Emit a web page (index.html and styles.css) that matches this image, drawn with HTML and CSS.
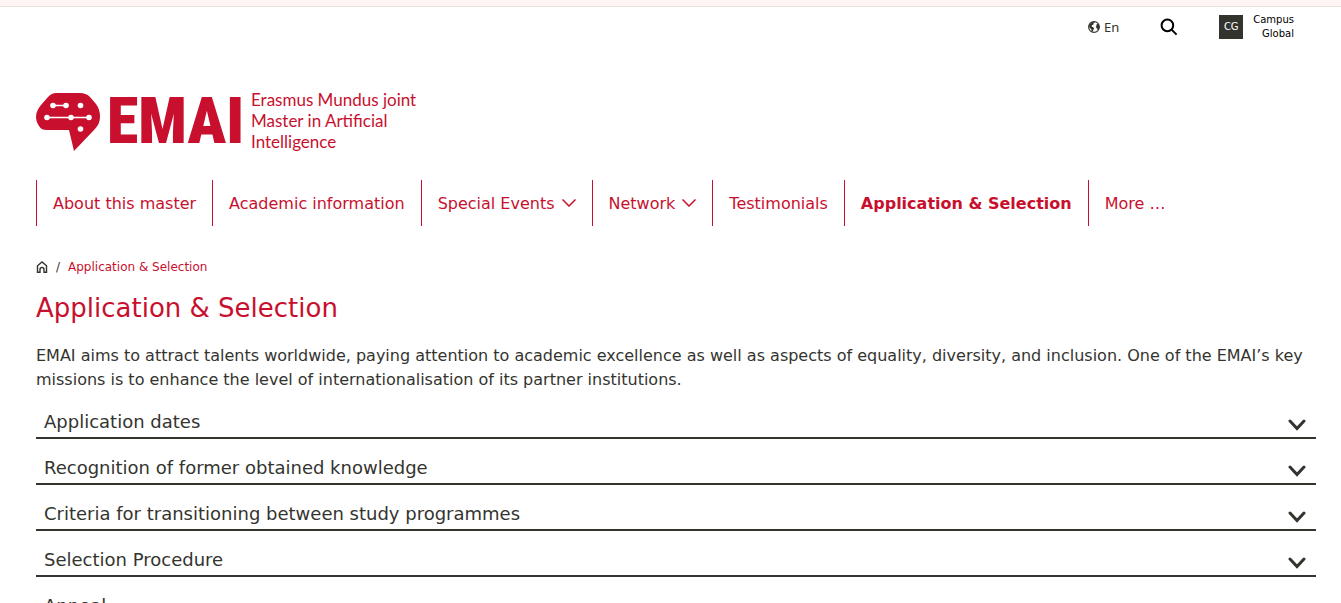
FILE: index.html
```html
<!DOCTYPE html>
<html lang="en">
<head>
<meta charset="utf-8">
<meta name="viewport" content="width=device-width, initial-scale=1">
<title>Application &amp; Selection - EMAI</title>
<link rel="stylesheet" href="styles.css">
</head>
<body>
<div class="notice-strip"></div>
<header class="header">
  <div class="tools">
    <button class="language" type="button">
      <svg class="globe" viewBox="0 0 12 12" aria-hidden="true"><circle cx="6" cy="6" r="5.4" fill="#fff" stroke="#34342f" stroke-width="1.1"/><path d="M1 4 3.2 1.4 6.200.8 6.600 1.800 5.200 2.800 5.600 3.600 4 4.200 3.500 5.600 5.200 6.300 6.200 7.600 5.200 9 5 10.800 3.500 10.300 3.300 8.300 1.300 6.500ZM8.800 3 10.3 3 11.4 5.2 11 8.2 9.600 9.300 9.200 7.400 8 6.400 8.300 4.800Z" fill="#34342f"/></svg>
      <span>En</span>
    </button>
    <button class="search" type="button" aria-label="Search">
      <svg class="search-icon" viewBox="0 0 18 18" aria-hidden="true"><circle cx="7.4" cy="7.4" r="5.8"/><path d="m11.6 11.6 5 5"/></svg>
    </button>
    <a class="campus" href="#"><span class="campus-badge">CG</span><span class="campus-name">Campus<br>Global</span></a>
  </div>
  <a class="logo" href="#">
    <svg class="logo-mark" viewBox="0 0 64 58" aria-hidden="true">
      <path d="M20 0H44C48 0 51 1 54 4L60 11C63 15 64 19 64 24C64 29 62 33 58 37L38 58 33 37H11C7 37 5 36 3 33C1 30 0 27 0 24C0 19 2 16 5 12L12 4C15 1 17 0 20 0Z" fill="#c8102e"/>
      <g stroke="#fff" stroke-width="1.4"><path d="M17 12.500H30M11 24.500H53"/></g>
      <g fill="#fff"><circle cx="17" cy="12.500" r="2.800"/><circle cx="30" cy="12.500" r="2.800"/><circle cx="44.500" cy="12.500" r="2.800"/><circle cx="11" cy="24.500" r="2.800"/><circle cx="35" cy="24.500" r="2.800"/><circle cx="53" cy="24.500" r="2.800"/><circle cx="44.500" cy="36" r="2.800"/></g>
    </svg>
    <span class="logo-name">EMAI</span>
    <span class="logo-tagline">Erasmus Mundus joint<br>Master in Artificial<br>Intelligence</span>
  </a>
</header>
<nav class="nav" aria-label="Main">
  <a class="nav-item" href="#">About this master</a>
  <a class="nav-item" href="#">Academic information</a>
  <a class="nav-item" href="#">Special Events<svg class="nav-arrow" viewBox="0 0 14 8" aria-hidden="true"><path d="m.5.5 6.500 6.500 6.500-6.500"/></svg></a>
  <a class="nav-item" href="#">Network<svg class="nav-arrow" viewBox="0 0 14 8" aria-hidden="true"><path d="m.5.5 6.500 6.500 6.500-6.500"/></svg></a>
  <a class="nav-item" href="#">Testimonials</a>
  <a class="nav-item current" href="#" aria-current="page">Application &amp; Selection</a>
  <a class="nav-item" href="#">More …</a>
</nav>
<main class="main">
  <nav class="breadcrumb" aria-label="Breadcrumb">
    <a class="home" href="#" aria-label="Home"><svg class="home-icon" viewBox="0 0 12 12" aria-hidden="true"><path d="M1.500 11.200V4.800L6 1l4.500 3.800v6.400H8V8.500a2 2 0 0 0-4 0v2.700Z"/></svg></a>
    <span class="slash">/</span>
    <a class="crumb" href="#">Application &amp; Selection</a>
  </nav>
  <h1 class="title">Application &amp; Selection</h1>
  <p class="intro">EMAI aims to attract talents worldwide, paying attention to academic excellence as well as aspects of equality, diversity, and inclusion. One of the EMAI’s key missions is to enhance the level of internationalisation of its partner institutions.</p>
  <section class="accordion">
    <h2 class="row"><button class="toggle" type="button" aria-expanded="false">Application dates<svg class="chevron" viewBox="0 0 18 12" aria-hidden="true"><path d="m2 2 7 7.500L16 2"/></svg></button></h2>
    <h2 class="row"><button class="toggle" type="button" aria-expanded="false">Recognition of former obtained knowledge<svg class="chevron" viewBox="0 0 18 12" aria-hidden="true"><path d="m2 2 7 7.500L16 2"/></svg></button></h2>
    <h2 class="row"><button class="toggle" type="button" aria-expanded="false">Criteria for transitioning between study programmes<svg class="chevron" viewBox="0 0 18 12" aria-hidden="true"><path d="m2 2 7 7.500L16 2"/></svg></button></h2>
    <h2 class="row"><button class="toggle" type="button" aria-expanded="false">Selection Procedure<svg class="chevron" viewBox="0 0 18 12" aria-hidden="true"><path d="m2 2 7 7.500L16 2"/></svg></button></h2>
    <h2 class="row"><button class="toggle" type="button" aria-expanded="false">Appeal<svg class="chevron" viewBox="0 0 18 12" aria-hidden="true"><path d="m2 2 7 7.500L16 2"/></svg></button></h2>
  </section>
</main>
</body>
</html>
```
FILE: styles.css
```css
* { box-sizing: border-box; }
body {
  margin: 0;
  background: #fff;
  color: #34342f;
  font-family: Verdana, "DejaVu Sans", sans-serif;
  font-size: 16px;
}
a { color: inherit; text-decoration: none; }
button {
  padding: 0;
  border: 0;
  background: none;
  color: inherit;
  font: inherit;
  cursor: pointer;
}
.notice-strip {
  height: 7px;
  background: #fff6f4;
  border-bottom: 1px solid #e6e0da;
}
.header { padding: 8px 47px 0 36px; }
.tools {
  display: flex;
  justify-content: flex-end;
  align-items: center;
  height: 24px;
}
.language {
  display: flex;
  align-items: center;
  gap: 4px;
  font: 13px/16px "Noto Sans", sans-serif;
}
.globe { width: 12px; height: 12px; }
.search { margin: 0 41px; }
.search-icon {
  display: block;
  width: 18px;
  height: 18px;
  fill: none;
  stroke: #000;
  stroke-width: 2;
}
.campus {
  display: flex;
  align-items: center;
  gap: 10px;
  color: #000;
  font-size: 10px;
  line-height: 14px;
  text-align: right;
}
.campus-badge {
  width: 24px;
  height: 24px;
  background: #34342f;
  color: #fff;
  line-height: 24px;
  text-align: center;
}
.logo {
  display: inline-flex;
  align-items: center;
  height: 60px;
  margin-top: 53px;
  color: #c8102e;
}
.logo-mark { width: 64px; height: 58px; }
.logo-name {
  width: 142px;
  padding-left: 7px;
  font: 900 64px/60px "Roboto Condensed", "Open Sans Condensed", "DejaVu Sans Condensed", sans-serif;
}
.logo-tagline {
  padding: 0 0 4px 9px;
  font: 17px/21px Lato, sans-serif;
  white-space: nowrap;
}
.nav {
  display: flex;
  flex-wrap: wrap;
  padding: 25px 25px 0 36px;
  color: #c8102e;
}
.nav-item {
  display: flex;
  align-items: center;
  gap: 7px;
  height: 46px;
  padding: 0 16px;
  border-left: 1px solid #c8102e;
}
.current { font-weight: bold; }
.nav-arrow {
  width: 14px;
  height: 8px;
  fill: none;
  stroke: currentColor;
  stroke-width: 1.5;
}
.main { padding: 32px 25px 24px 36px; }
.breadcrumb {
  display: flex;
  align-items: center;
  font-size: 12px;
  line-height: 18px;
}
.home-icon {
  display: block;
  width: 12px;
  height: 12px;
  fill: none;
  stroke: #34342f;
  stroke-width: 1.4;
}
.slash { margin: 0 8px; }
.crumb { color: #c8102e; }
.title {
  margin: 16px 0 20px;
  color: #c8102e;
  font-size: 26px;
  font-weight: normal;
  line-height: 32px;
}
.intro { margin: 0; line-height: 24px; }
.accordion { padding-top: 1px; }
.row {
  margin: 0;
  border-bottom: 2px solid #34342f;
  font-size: 18px;
  font-weight: normal;
}
.toggle {
  display: flex;
  justify-content: space-between;
  align-items: center;
  width: 100%;
  padding: 15px 10px 1px 8px;
  line-height: 28px;
  text-align: left;
}
.chevron {
  width: 18px;
  height: 12px;
  margin-top: 6px;
  fill: none;
  stroke: #34342f;
  stroke-width: 3;
  stroke-linecap: round;
}
```
